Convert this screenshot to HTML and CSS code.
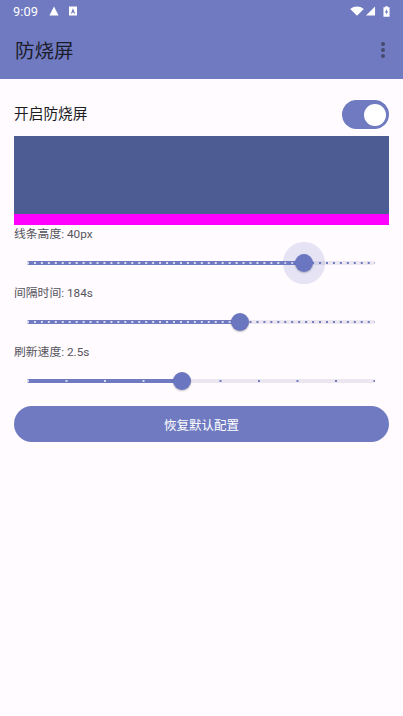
FILE: index.html
```html
<!DOCTYPE html>
<html lang="zh-CN">
<head>
<meta charset="utf-8">
<title>防烧屏</title>
<link rel="stylesheet" href="styles.css">
</head>
<body>
<header class="appbar">
  <div class="status">
    <span class="time">9:09</span>
    <svg class="ico-warn" viewBox="0 0 10 10"><path d="M5 0.5 L9.6 9.5 H0.4 Z"/></svg>
    <svg class="ico-a" viewBox="0 0 10 10"><path fill-rule="evenodd" d="M1 .5H9V9.5H1Z M5 2.2 L2.9 7.6H4L4.4 6.5H5.6L6 7.6H7.1L5 2.2Z"/></svg>
    <span class="status-gap"></span>
    <svg class="ico-wifi" viewBox="0 0 16 11"><path d="M0.3 3.2 C4.6 -0.6 11.4 -0.6 15.7 3.2 L8 11 Z"/></svg>
    <svg class="ico-signal" viewBox="0 0 11 11"><path d="M10.5 0.5 V10.5 H0.5 Z"/></svg>
    <svg class="ico-batt" viewBox="0 0 8 12"><path fill-rule="evenodd" d="M2.5 0H5.5V1H7.5V12H.5V1H2.5Z M4.6 2.6 L2.2 7H3.7V9.8L5.9 5.6H4.4Z"/></svg>
  </div>
  <div class="toolbar">
    <h1 class="title">防烧屏</h1>
    <div class="more"><i></i><i></i><i></i></div>
  </div>
</header>
<main class="content">
  <div class="toggle-row">
    <span class="toggle-label">开启防烧屏</span>
    <div class="switch"><span class="knob"></span></div>
  </div>
  <div class="preview"><div class="line"></div></div>

  <div class="setting">
    <div class="label">线条高度: 40px</div>
    <div class="slider">
      <div class="track ticks-a"><div class="fill" style="width:79.5%"></div></div>
      <span class="thumb active" style="left:79.5%"></span>
    </div>
  </div>
  <div class="setting">
    <div class="label">间隔时间: 184s</div>
    <div class="slider">
      <div class="track ticks-a"><div class="fill" style="width:61.2%"></div></div>
      <span class="thumb" style="left:61.2%"></span>
    </div>
  </div>
  <div class="setting">
    <div class="label">刷新速度: 2.5s</div>
    <div class="slider">
      <div class="track ticks-c"><div class="fill" style="width:44.5%"></div></div>
      <span class="thumb" style="left:44.5%"></span>
    </div>
  </div>
  <button class="reset">恢复默认配置</button>
</main>
</body>
</html>
```
FILE: styles.css
```css
* { box-sizing: border-box; }
html, body { margin: 0; height: 100%; }
body {
  background: #fffbff;
  font-family: Roboto, "Noto Sans CJK SC", sans-serif;
  overflow: hidden;
}
.appbar { background: #6f7ac1; height: 79px; }
.status {
  height: 24px;
  display: flex;
  align-items: center;
  padding: 0 13px 2px 13px;
  color: #fff;
  fill: #fff;
}
.time { font-size: 12.8px; width: 24px; letter-spacing: .1px; }
.ico-warn { width: 10px; height: 10px; margin-left: 12px; }
.ico-a { width: 10px; height: 10px; margin-left: 9px; }
.status-gap { flex: 1; }
.ico-wifi { width: 14px; height: 10px; }
.ico-signal { width: 11px; height: 10px; margin-left: 1px; }
.ico-batt { width: 7px; height: 11px; margin-left: 7px; }
.toolbar {
  height: 55px;
  display: flex;
  align-items: center;
  justify-content: space-between;
  padding: 0 18px 4px 15px;
}
.title { margin: 0; font-size: 19.5px; font-weight: 400; color: #1c1b2a; }
.more { display: flex; flex-direction: column; gap: 2px; }
.more i { width: 4px; height: 4px; border-radius: 50%; background: #454a6e; }
.content { padding: 0 14px; }
.toggle-row {
  height: 57px;
  display: flex;
  align-items: center;
  justify-content: space-between;
  padding-top: 14px;
}
.toggle-label { font-size: 14.7px; color: #1c1b1f; line-height: 20px; margin-top: -2px; }
.switch {
  width: 47px;
  height: 29px;
  border-radius: 15px;
  background: #6f7ac1;
  display: flex;
  align-items: center;
  justify-content: flex-end;
  padding-right: 3px;
}
.knob { width: 22px; height: 22px; border-radius: 50%; background: #fff; }
.preview {
  height: 89px;
  background: #4d5c92;
  display: flex;
  align-items: flex-end;
}
.line { height: 11px; width: 100%; background: #ff00ff; }
.setting { height: 59px; }
.label { font-size: 11.8px; line-height: 18px; color: #55555c; }
.slider { position: relative; height: 4px; margin: 18px 14px 0 13px; }
.track {
  position: relative;
  height: 4px;
  border-radius: 2px;
  background-color: #ebe6f0;
}
.track::after {
  content: "";
  position: absolute;
  inset: 0;
  background-repeat: repeat-x;
}
.ticks-a::after {
  background-image: radial-gradient(circle at 1px 2px, #6f7ac1 0 1px, transparent 1.2px);
  background-size: 6.96px 4px;
}
.ticks-c::after {
  background-image: radial-gradient(circle at 1px 2px, #6f7ac1 0 1px, transparent 1.2px);
  background-size: 38.5px 4px;
}
.fill {
  height: 100%;
  border-radius: 2px;
  background: #6f7ac1;
  position: relative;
  z-index: 1;
}
.fill::after {
  content: "";
  position: absolute;
  inset: 0;
  background-repeat: repeat-x;
}
.ticks-a .fill::after {
  background-image: radial-gradient(circle at 1px 2px, #d9dcf0 0 1px, transparent 1.2px);
  background-size: 6.96px 4px;
}
.ticks-c .fill::after {
  background-image: radial-gradient(circle at 1px 2px, #d9dcf0 0 1px, transparent 1.2px);
  background-size: 38.5px 4px;
}
.thumb {
  position: absolute;
  top: 2px;
  width: 18px;
  height: 18px;
  margin: -9px 0 0 -9px;
  border-radius: 50%;
  background: #6a76c0;
  box-shadow: 0 1px 2px rgba(0, 0, 0, .25);
  z-index: 2;
}
.thumb.active { box-shadow: 0 0 0 12px rgba(111, 122, 193, .18), 0 1px 2px rgba(0, 0, 0, .25); }
.reset {
  display: block;
  width: 100%;
  height: 36px;
  margin-top: 4px;
  border: 0;
  border-radius: 18px;
  background: #6f7ac1;
  color: #fff;
  font: 400 12.5px Roboto, "Noto Sans CJK SC", sans-serif;
}
```
